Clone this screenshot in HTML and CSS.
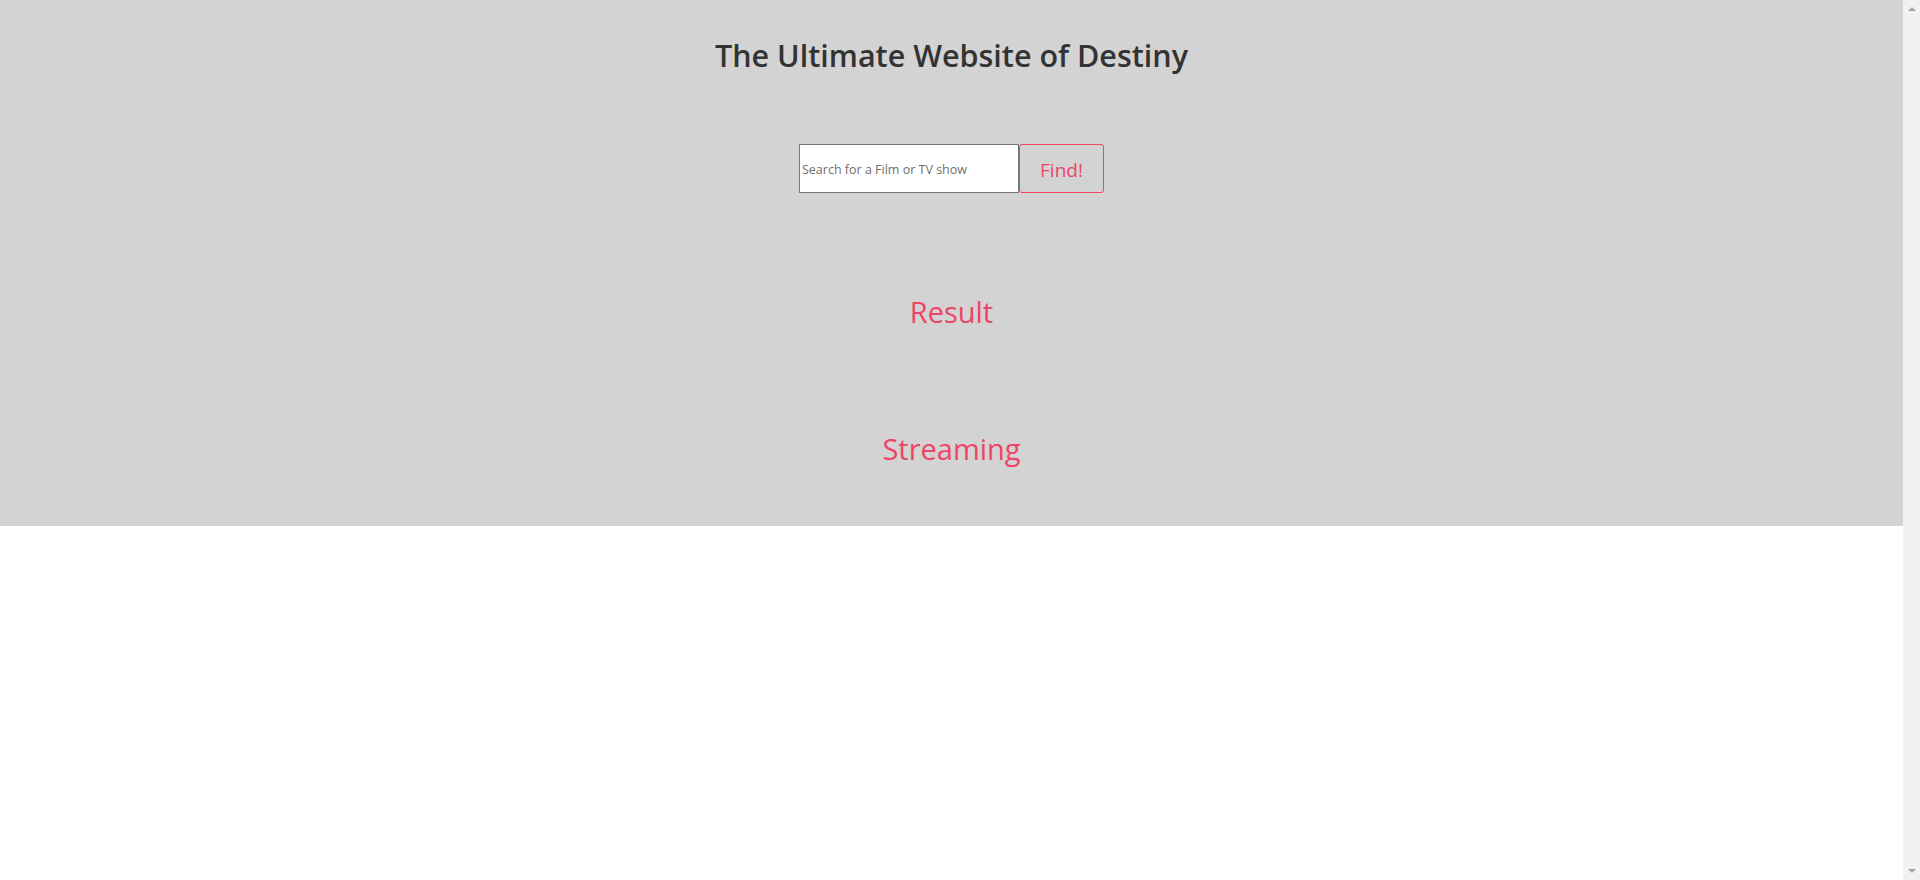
FILE: index.html
```html
<!DOCTYPE html>
<html lang="en">
<head>
<meta charset="utf-8">
<title>The Ultimate Website of Destiny</title>
<link rel="stylesheet" href="styles.css">
</head>
<body>
<div class="viewport">
  <main class="page">
    <header class="hero">
      <h1 class="title">The Ultimate Website of Destiny</h1>
      <form class="search" onsubmit="return false;">
        <input class="search-input" type="text" placeholder="Search for a Film or TV show">
        <button class="search-button" type="submit">Find!</button>
      </form>
      <section class="block"><h2 class="block-title">Result</h2></section>
      <section class="block"><h2 class="block-title">Streaming</h2></section>
    </header>
  </main>
  <div class="scrollbar" aria-hidden="true">
    <span class="arrow arrow-up"></span>
    <span class="arrow arrow-down"></span>
  </div>
</div>
</body>
</html>
```
FILE: styles.css
```css
html, body {
  margin: 0;
  height: 100%;
  overflow: hidden;
}
body {
  background: #ffffff;
  font-family: "Open Sans", "Noto Sans", sans-serif;
}
.viewport {
  display: flex;
  height: 100%;
}
.page {
  flex: 1;
  min-width: 0;
  background: #ffffff;
}
.scrollbar {
  width: 17px;
  flex: none;
  background: #f1f1f1;
  display: flex;
  flex-direction: column;
  justify-content: space-between;
  align-items: center;
  padding: 7px 0;
  box-sizing: border-box;
}
.arrow {
  width: 0;
  height: 0;
  border-left: 4px solid transparent;
  border-right: 4px solid transparent;
}
.arrow-up {
  border-bottom: 4px solid #a3a3a3;
}
.arrow-down {
  border-top: 4px solid #a3a3a3;
}
.hero {
  background: #d3d3d3;
  text-align: center;
  padding: 35px 0 57px;
}
.title {
  margin: 0;
  font-size: 30.5px;
  line-height: 40px;
  font-weight: 600;
  color: #333333;
}
.search {
  margin-top: 69px;
  display: flex;
  justify-content: center;
}
.search-input {
  box-sizing: border-box;
  width: 220px;
  height: 49px;
  margin: 0;
  padding: 2px 2px 0;
  border: 1px solid #767676;
  border-radius: 0;
  background: #ffffff;
  font-family: "Open Sans", sans-serif;
  font-size: 12.5px;
}
.search-input::placeholder {
  color: #6f6f6f;
}
.search-button {
  box-sizing: border-box;
  width: 85px;
  height: 49px;
  margin: 0;
  padding: 2px 0 0;
  border: 1px solid #ee4466;
  border-radius: 3px;
  background: transparent;
  color: #ee4466;
  font-family: "Open Sans", sans-serif;
  font-size: 19px;
}
.block {
  margin-top: 99px;
}
.block + .block {
  margin-top: 97px;
}
.block-title {
  margin: 0;
  font-size: 29px;
  line-height: 40px;
  font-weight: 400;
  color: #ee4466;
}
```
